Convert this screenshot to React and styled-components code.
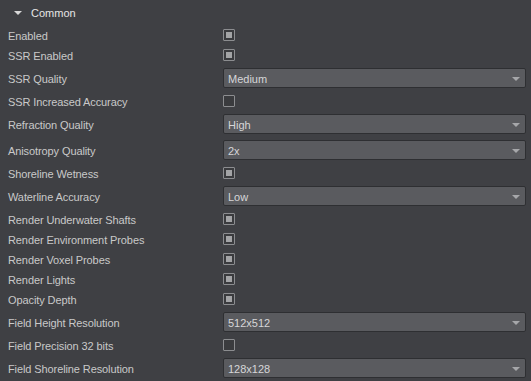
import styled, { createGlobalStyle } from "styled-components";

const GlobalStyle = createGlobalStyle`
	html, body {
		margin: 0;
		padding: 0;
		background: #3f4044;
	}
	body {
		font-family: "Liberation Sans", Arial, sans-serif;
		font-size: 11px;
	}
`;

const rows = [
	{ label: "Enabled", type: "check", checked: true },
	{ label: "SSR Enabled", type: "check", checked: true },
	{ label: "SSR Quality", type: "select", value: "Medium" },
	{ label: "SSR Increased Accuracy", type: "check", checked: false },
	{ label: "Refraction Quality", type: "select", value: "High" },
	{ label: "Anisotropy Quality", type: "select", value: "2x" },
	{ label: "Shoreline Wetness", type: "check", checked: true },
	{ label: "Waterline Accuracy", type: "select", value: "Low" },
	{ label: "Render Underwater Shafts", type: "check", checked: true },
	{ label: "Render Environment Probes", type: "check", checked: true },
	{ label: "Render Voxel Probes", type: "check", checked: true },
	{ label: "Render Lights", type: "check", checked: true },
	{ label: "Opacity Depth", type: "check", checked: true },
	{ label: "Field Height Resolution", type: "select", value: "512x512" },
	{ label: "Field Precision 32 bits", type: "check", checked: false },
	{ label: "Field Shoreline Resolution", type: "select", value: "128x128" },
];

function Checkbox({ checked }) {
	return <Box>{checked && <Mark />}</Box>;
}

function Select({ value }) {
	return (
		<Combo>
			<span>{value}</span>
			<Arrow />
		</Combo>
	);
}

export default function App() {
	return (
		<>
			<GlobalStyle />
			<Panel>
				<Header>
					<Caret />
					<span>Common</span>
				</Header>
				{rows.map((row) => (
					<Row key={row.label} $tall={row.type === "select"}>
						<Label>{row.label}</Label>
						<Field>
							{row.type === "check" ? (
								<Checkbox checked={row.checked} />
							) : (
								<Select value={row.value} />
							)}
						</Field>
					</Row>
				))}
			</Panel>
		</>
	);
}

const Panel = styled.div`
	width: 531px;
	height: 381px;
	overflow: hidden;
	background: #3f4044;
	display: flex;
	flex-direction: column;
`;

const Header = styled.div`
	height: 25px;
	flex: none;
	display: flex;
	align-items: center;
	padding-left: 14px;
	box-sizing: border-box;
	color: #e6e6e6;
	gap: 9px;

	span {
		padding-top: 1px;
	}
`;

const Caret = styled.div`
	width: 0;
	height: 0;
	border-left: 4px solid transparent;
	border-right: 4px solid transparent;
	border-top: 4px solid #d8d8d8;
`;

const Row = styled.div`
	height: ${(p) => (p.$tall ? "26px" : "20px")};
	flex: none;
	display: grid;
	grid-template-columns: 223px 1fr;
	align-items: center;
	padding-right: 5px;
`;

const Label = styled.div`
	padding-left: 8px;
	padding-top: 1px;
	color: #c9c9c9;
	white-space: nowrap;
	letter-spacing: -0.1px;
`;

const Field = styled.div`
	display: flex;
	align-items: center;
`;

const Box = styled.div`
	width: 12px;
	height: 12px;
	box-sizing: border-box;
	border: 1px solid #8c8d90;
	border-radius: 1px;
	background: #3a3b3e;
	display: flex;
	align-items: center;
	justify-content: center;
`;

const Mark = styled.div`
	width: 6px;
	height: 6px;
	background: #a3a4a6;
`;

const Combo = styled.div`
	flex: 1;
	height: 20px;
	box-sizing: border-box;
	border: 1px solid #2e2f32;
	border-radius: 2px;
	background: #5a5b5f;
	color: #d6d6d8;
	display: flex;
	align-items: center;
	justify-content: space-between;
	padding: 1px 4px 0 4px;
`;

const Arrow = styled.div`
	width: 0;
	height: 0;
	margin-right: 1px;
	border-left: 4px solid transparent;
	border-right: 4px solid transparent;
	border-top: 4px solid #a6a7aa;
`;
